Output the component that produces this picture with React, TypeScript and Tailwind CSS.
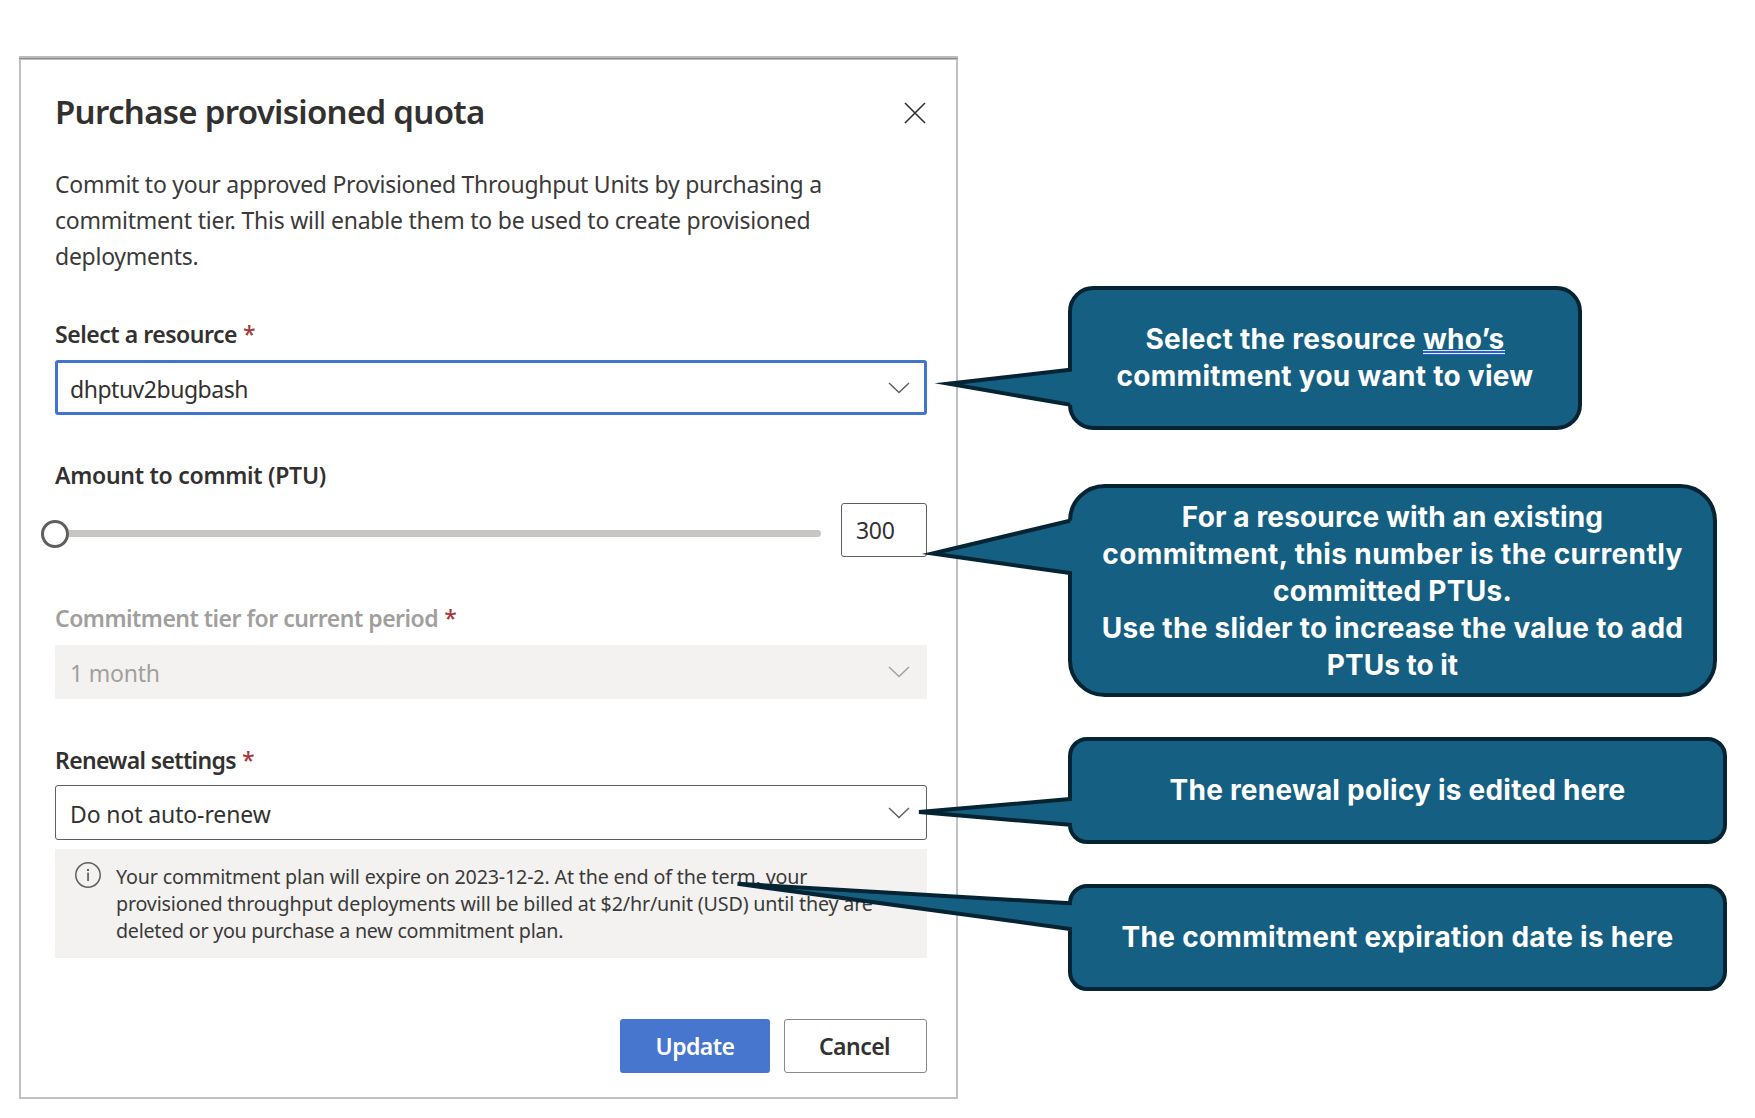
import type { ReactNode } from "react";

function Chevron({ className }: { className: string }) {
  return (
    <svg viewBox="0 0 22 12" className={`h-3 w-[22px] shrink-0 ${className}`} fill="none" stroke="currentColor" strokeWidth="1.4">
      <path d="M1 1 L11 10.6 L21 1" />
    </svg>
  );
}

function Label({ children, required, className = "" }: { children: ReactNode; required?: boolean; className?: string }) {
  return (
    <div className={`h-[30px] whitespace-nowrap text-[23px] leading-[31px] font-semibold ${className}`}>
      {children}
      {required && <span className="ml-1.5 font-medium tracking-normal text-[#a4373a]">*</span>}
    </div>
  );
}

type CalloutProps = {
  width: number;
  height: number;
  tip: [number, number];
  base: [number, number];
  className: string;
  children: ReactNode;
};

/* Rounded speech balloon whose pointer leaves the left edge. */
function Callout({ width, height, tip, base, className, children }: CalloutProps) {
  const r = height / 6;
  const d = [
    `M0 ${base[0]} L${tip[0]} ${tip[1]} L0 ${base[1]}`,
    `L0 ${height - r} A${r} ${r} 0 0 0 ${r} ${height}`,
    `H${width - r} A${r} ${r} 0 0 0 ${width} ${height - r}`,
    `V${r} A${r} ${r} 0 0 0 ${width - r} 0`,
    `H${r} A${r} ${r} 0 0 0 0 ${r} Z`,
  ].join(" ");
  return (
    <div className={`relative flex items-center justify-center ${className}`}>
      <svg width={width} height={height} className="absolute top-0 left-0 overflow-visible">
        <path d={d} fill="#156082" stroke="#042433" strokeWidth="4" strokeMiterlimit="8" />
      </svg>
      <p className="relative text-center font-['Inter',sans-serif] text-[28px] leading-[37px] font-bold tracking-[0.28px] whitespace-nowrap text-white">
        {children}
      </p>
    </div>
  );
}

export default function App() {
  return (
    <div className="flex h-[1118px] w-[1755px] items-start overflow-hidden bg-white font-['Noto_Sans','Open_Sans',sans-serif] text-[#323130]">
      <section className="mt-14 ml-[19px] flex h-[1043px] w-[939px] shrink-0 flex-col border-2 border-[#c0c0c0] bg-white">
        <div className="-mx-0.5 -mt-0.5 h-1 shrink-0 border-t-2 border-b border-[#bdbdbd] bg-[#8c8c8c]" />
        <div className="flex flex-col pr-[29px] pl-[34px]">
          <header className="mt-8 flex h-10 items-center justify-between">
            <h1 className="text-[33px] leading-10 font-semibold tracking-[-0.7px]">Purchase provisioned quota</h1>
            <svg viewBox="0 0 22 22" className="mt-px mr-px size-[22px]" fill="none" stroke="#323130" strokeWidth="1.6">
              <path d="M1 1 L21 21 M21 1 L1 21" />
            </svg>
          </header>

          <p className="mt-[34px] text-[23px] leading-9 tracking-[-0.26px] whitespace-nowrap text-[#3b3a39]">
            Commit to your approved Provisioned Throughput Units by purchasing a<br />
            <span className="tracking-[-0.23px]">commitment tier. This will enable them to be used to create provisioned</span><br />
            deployments.
          </p>

          <Label required className="mt-[45px] tracking-[-0.47px]">Select a resource</Label>
          <div className="mt-[11px] flex h-[55px] items-center justify-between rounded-[3px] border-[3px] border-[#4174cd] pr-3.5 pl-3">
            <span className="pt-[3px] text-[23px] tracking-[-0.48px]">dhptuv2bugbash</span>
            <Chevron className="text-[#605e5c]" />
          </div>

          <Label className="mt-[45px] tracking-[-0.27px]">Amount to commit (PTU)</Label>
          <div className="mt-[13px] flex h-[54px] items-center">
            <div className="mt-[7px] -ml-3.5 flex flex-1 items-center">
              <span className="size-7 shrink-0 rounded-full border-[3px] border-[#605e5c] bg-white" />
              <span className="h-[7px] flex-1 rounded-r-full bg-[#c8c6c4]" />
            </div>
            <div className="ml-5 flex h-full w-[86px] items-center rounded-[3px] border-[1.5px] border-[#605e5c] pt-px pl-3.5 text-[23px] tracking-[-0.3px]">
              300
            </div>
          </div>

          <Label required className="mt-[46px] tracking-[-0.51px] text-[#a19f9d]">Commitment tier for current period</Label>
          <div className="mt-3 flex h-[54px] items-center justify-between bg-[#f3f2f1] pr-[17px] pl-[15px] text-[#a19f9d]">
            <span className="pt-[3px] text-[23px] tracking-[-0.2px]">1 month</span>
            <Chevron className="text-[#a19f9d]" />
          </div>

          <Label required className="mt-[46px] tracking-[-0.65px]">Renewal settings</Label>
          <div className="mt-2.5 flex h-[55px] items-center justify-between rounded-[3px] border-[1.5px] border-[#605e5c] pr-4 pl-3.5">
            <span className="pt-[3px] text-[23px] tracking-[-0.12px]">Do not auto-renew</span>
            <Chevron className="text-[#605e5c]" />
          </div>

          <div className="mt-[9px] flex h-[109px] items-start bg-[#f3f2f1] pt-3.5 pl-5">
            <svg viewBox="0 0 26 26" className="-mt-px size-[26px] shrink-0">
              <circle cx="13" cy="13" r="12.2" fill="none" stroke="#605e5c" strokeWidth="1.5" />
              <rect x="12.2" y="10.6" width="1.7" height="8.4" fill="#605e5c" />
              <rect x="12" y="7" width="2" height="2" fill="#605e5c" />
            </svg>
            <p className="ml-[15px] text-[19.7px] leading-[27.2px] tracking-[-0.17px] whitespace-nowrap text-[#3b3a39]">
              Your commitment plan will expire on 2023-12-2. At the end of the term, your<br />
              provisioned throughput deployments will be billed at $2/hr/unit (USD) until they are<br />
              <span className="tracking-[-0.26px]">deleted or you purchase a new commitment plan.</span>
            </p>
          </div>

          <footer className="mt-[61px] flex h-[54px] justify-end gap-3.5 text-[23px] font-semibold tracking-[-0.55px]">
            <button className="w-[150px] rounded-[3px] bg-[#4676cd] pt-px text-white">Update</button>
            <button className="w-[143px] rounded-[3px] border-[1.5px] border-[#8a8886] pt-px pr-0.5">Cancel</button>
          </footer>
        </div>
      </section>

      <aside className="mt-[288px] ml-28 flex flex-col items-start">
        <Callout width={510} height={140} tip={[-121.5, 95.7]} base={[81.7, 116.7]} className="h-[140px] w-[510px]">
          Select the resource{" "}
          <span className="relative inline-block">
            who’s
            <span className="absolute bottom-[3px] left-0 flex h-[5px] w-full flex-col">
              <span className="h-px bg-[#dfe8fa]" />
              <span className="h-0.5 bg-[#2b62c9]" />
              <span className="h-px bg-[#dfe8fa]" />
              <span className="h-px bg-[#2b62c9]" />
            </span>
          </span>
          <br />
          commitment you want to view
        </Callout>
        <Callout width={645} height={209} tip={[-137.5, 67.5]} base={[34.8, 87.1]} className="mt-[58px] h-[209px] w-[645px] pt-0.5">
          <span className="tracking-[0.15px]">For a resource with an existing</span><br />
          <span className="tracking-[0.4px]">commitment, this number is the currently</span><br />
          committed PTUs.<br />
          Use the slider to increase the value to add<br />
          <span className="tracking-normal">PTUs to it</span>
        </Callout>
        <Callout width={655} height={103} tip={[-151, 73]} base={[60.1, 85.8]} className="mt-11 h-[103px] w-[655px]">
          <span className="tracking-[0.22px]">The renewal policy is edited here</span>
        </Callout>
        <Callout width={655} height={103} tip={[-332.5, -2.2]} base={[17.2, 42.9]} className="mt-11 h-[103px] w-[655px]">
          The commitment expiration date is here
        </Callout>
      </aside>
    </div>
  );
}
